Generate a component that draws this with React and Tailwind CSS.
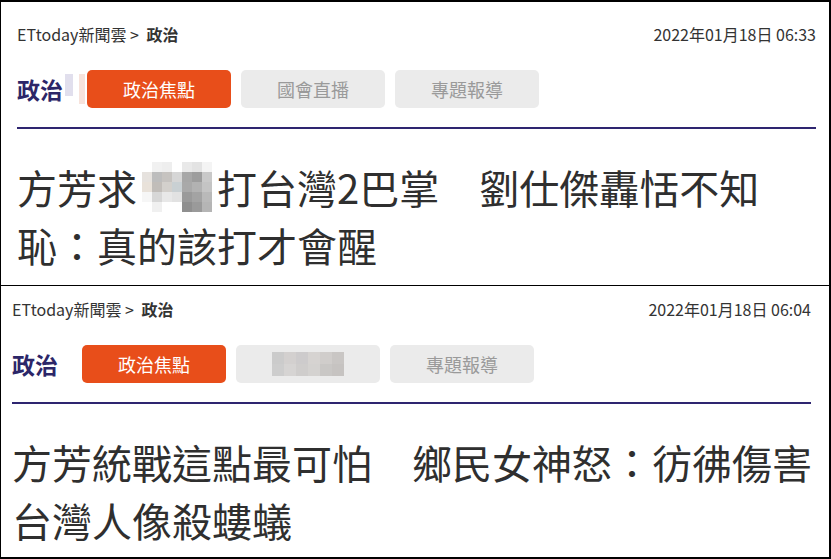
import React from "react";

const FONT = { fontFamily: '"Noto Sans CJK TC", "Noto Sans", sans-serif' };

function Mosaic({ cells, cols, size = 10 }) {
  return (
    <span className="inline-grid align-middle" style={{ gridTemplateColumns: `repeat(${cols}, ${size}px)` }}>
      {cells.map((c, i) => (
        <span key={i} className="block" style={{ width: size, height: size, background: c }} />
      ))}
    </span>
  );
}

const titleMosaic = [
  "#fff", "#f1f1f1", "#eeeeee", "#fff", "#e9e9e9", "#e3e3e3", "#f4f4f4",
  "#e6e2de", "#bdbdbd", "#c6c3c0", "#d6d6d6", "#a7a7a7", "#9d9d9d", "#c9c9c9",
  "#e9e2da", "#c1bdb9", "#d3d0cc", "#c9d0d3", "#a9a9a9", "#b2b2b2", "#c4c4c4",
  "#f6f6f6", "#d7d7d7", "#e8e8e8", "#e2e2e2", "#9a9a9a", "#a3a3a3", "#b9b9b9",
  "#fff", "#f0f0f0", "#fff", "#fff", "#8f8f8f", "#9a9a9a", "#b5b5b5",
];

const tabMosaic = [
  "#cbcbcb", "#d3d0cf", "#cdcbcc", "#d6d3d1", "#d0cdcb", "#c9c6c4",
  "#cdcdcd", "#d6d4d3", "#cfcdcc", "#d4d2d0", "#c9c7c5", "#c6c3c1",
];

function Panel({ pl, pt, pb, date, hide, title, border }) {
  return (
    <div className={`${border} border-black text-[#333]`} style={{ paddingLeft: pl }}>
      <div className="w-[799px]" style={{ paddingTop: pt, paddingBottom: pb }}>
        <div className="flex justify-between h-6 items-center text-[16px] leading-6">
          <div>
            ETtoday新聞雲 &gt; <span className="font-bold ml-1">政治</span>
          </div>
          <div>{date}</div>
        </div>
        <div className="flex items-center mt-6 h-[38px]">
          <div className="w-[70px] shrink-0 whitespace-nowrap flex items-center text-[23px] font-bold text-[#2c2668]">
            政治
            {hide && (
              <span className="ml-0.5 flex gap-[6px]">
                <span className="block w-[8px] h-[22px] bg-[#d4d2e6] opacity-70" />
                <span className="block w-[6px] h-[30px] bg-[#f4d7cd] opacity-70" />
              </span>
            )}
          </div>
          <div className="flex gap-[10px]">
            <div className="w-[144px] h-[38px] rounded-[5px] bg-[#e84e1a] text-white text-[18px] flex items-center justify-center">
              政治焦點
            </div>
            <div className="w-[144px] h-[38px] rounded-[5px] bg-[#ebebeb] text-[#9a9a9a] text-[18px] flex items-center justify-center">
              {hide ? "國會直播" : <Mosaic cells={tabMosaic} cols={6} size={12} />}
            </div>
            <div className="w-[144px] h-[38px] rounded-[5px] bg-[#ebebeb] text-[#9a9a9a] text-[18px] flex items-center justify-center">
              專題報導
            </div>
          </div>
        </div>
        <div className="mt-[19px] h-[2px] bg-[#2e2570]" />
        <div className="mt-[29px] text-[40px] leading-[58px] whitespace-nowrap text-[#2f2f2f]">{title}</div>
      </div>
    </div>
  );
}

export default function App() {
  return (
    <div className="w-[831px] h-[559px] bg-white overflow-hidden" style={FONT}>
      <div className="w-[831px] border-r-2 border-black">
        <Panel
          pl={16}
          pt={20}
          pb={11}
          hide
          border="border-t-2 border-l border-b"
          date="2022年01月18日 06:33"
          title={
            <>
              方芳求
              <span className="inline-flex w-[80px] justify-center align-middle -mt-3">
                <Mosaic cells={titleMosaic} cols={7} />
              </span>
              打台灣2巴掌　劉仕傑轟恬不知
              <br />
              恥：真的該打才會醒
            </>
          }
        />
        <Panel
          pl={11}
          pt={11}
          pb={8}
          border="border-l border-b-2"
          date="2022年01月18日 06:04"
          title={
            <>
              方芳統戰這點最可怕　鄉民女神怒：彷彿傷害
              <br />
              台灣人像殺螻蟻
            </>
          }
        />
      </div>
    </div>
  );
}
